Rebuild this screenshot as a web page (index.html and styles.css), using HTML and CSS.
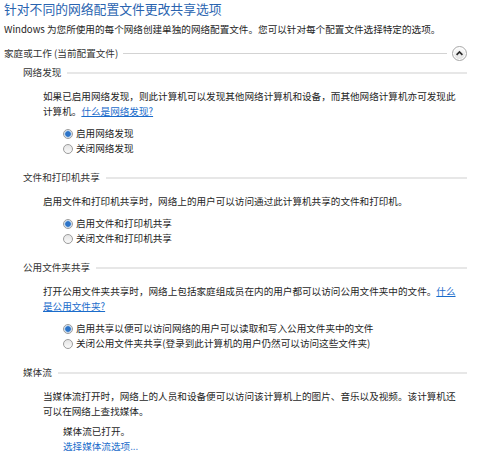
FILE: index.html
```html
<!DOCTYPE html>
<html lang="zh-CN">
<head>
  <meta charset="UTF-8">
  <title>高级共享设置</title>
  <link rel="stylesheet" href="styles.css">
</head>
<body>
  <div class="page">
    <h1 class="title">针对不同的网络配置文件更改共享选项</h1>
    <p class="intro">Windows 为您所使用的每个网络创建单独的网络配置文件。您可以针对每个配置文件选择特定的选项。</p>

    <div class="profile-head">
      <span>家庭或工作 (当前配置文件)</span>
      <span class="rule"></span>
      <span class="collapse">
        <svg width="15" height="15" viewBox="0 0 15 15"><path d="M4.6 8.8 L7.5 5.9 L10.4 8.8" fill="none" stroke="#2b2b2b" stroke-width="1.7"/></svg>
      </span>
    </div>

    <section class="group first">
      <div class="group-head"><span>网络发现</span><span class="rule"></span></div>
      <div class="desc">
        <span class="line">如果已启用网络发现，则此计算机可以发现其他网络计算机和设备，而其他网络计算机亦可发现此</span>
        <span class="line">计算机。<a href="#" class="link">什么是网络发现?</a></span>
      </div>
      <div class="options">
        <div class="option"><span class="radio checked"></span>启用网络发现</div>
        <div class="option"><span class="radio"></span>关闭网络发现</div>
      </div>
    </section>

    <section class="group">
      <div class="group-head"><span>文件和打印机共享</span><span class="rule"></span></div>
      <div class="desc">
        <span class="line">启用文件和打印机共享时，网络上的用户可以访问通过此计算机共享的文件和打印机。</span>
      </div>
      <div class="options">
        <div class="option"><span class="radio checked"></span>启用文件和打印机共享</div>
        <div class="option"><span class="radio"></span>关闭文件和打印机共享</div>
      </div>
    </section>

    <section class="group">
      <div class="group-head"><span>公用文件夹共享</span><span class="rule"></span></div>
      <div class="desc">
        <span class="line">打开公用文件夹共享时，网络上包括家庭组成员在内的用户都可以访问公用文件夹中的文件。<a href="#" class="link">什么</a></span>
        <span class="line"><a href="#" class="link">是公用文件夹?</a></span>
      </div>
      <div class="options">
        <div class="option"><span class="radio checked"></span>启用共享以便可以访问网络的用户可以读取和写入公用文件夹中的文件</div>
        <div class="option"><span class="radio"></span>关闭公用文件夹共享(登录到此计算机的用户仍然可以访问这些文件夹)</div>
      </div>
    </section>

    <section class="group">
      <div class="group-head"><span>媒体流</span><span class="rule"></span></div>
      <div class="desc">
        <span class="line">当媒体流打开时，网络上的人员和设备便可以访问该计算机上的图片、音乐以及视频。该计算机还</span>
        <span class="line">可以在网络上查找媒体。</span>
      </div>
      <div class="status">
        <div>媒体流已打开。</div>
        <a href="#" class="link plain">选择媒体流选项...</a>
      </div>
    </section>
  </div>
</body>
</html>
```

FILE: styles.css
```css
/* Base */
body {
  margin: 0;
  font-family: "Noto Sans CJK SC", sans-serif;
  font-size: 9.6px;
  line-height: 15px;
  color: #1e1e1e;
  background: #fff;
}

.page {
  width: 463px;
  padding-left: 4px;
}

/* Header */
.title {
  margin: 0;
  font-size: 12.8px;
  line-height: 18px;
  font-weight: normal;
  color: #2a64b0;
}

.intro {
  margin: 4px 0 0;
}

/* Profile header with collapse button */
.profile-head {
  display: flex;
  align-items: center;
  gap: 5px;
  height: 16px;
  margin-top: 8px;
  color: #333;
}

.profile-head .rule {
  flex: 1;
  height: 1px;
  background: #d3d3d3;
}

.collapse {
  width: 13px;
  height: 13px;
  border: 1px solid #a8a8a8;
  border-radius: 50%;
  background: linear-gradient(#fdfdfd, #e2e2e2);
  box-shadow: inset 0 0 0 1px #fff;
  position: relative;
}

.collapse svg {
  position: absolute;
  left: -1px;
  top: -1px;
}

/* Sections */
.group {
  margin-top: 14px;
}

.group.first {
  margin-top: 4px;
}

.group-head {
  display: flex;
  align-items: center;
  gap: 6px;
  padding-left: 19px;
  color: #333;
}

.group-head .rule {
  flex: 1;
  height: 2px;
  background: #e7e7e7;
}

.desc {
  margin: 9px 0 0 39px;
  width: 418px;
}

.desc .line {
  display: block;
  white-space: nowrap;
}

.link {
  color: #1a6ccb;
  text-decoration: underline;
}

.link.plain {
  text-decoration: none;
}

/* Radio options */
.options {
  margin: 7px 0 0 59px;
}

.option {
  display: flex;
  align-items: center;
  gap: 3px;
  height: 15px;
  white-space: nowrap;
}

.radio {
  width: 8px;
  height: 8px;
  border: 1px solid #9c9c9c;
  border-radius: 50%;
  background: linear-gradient(#e4e4e4, #fafafa);
}

.radio.checked {
  background: radial-gradient(circle, #2d74c8 0 2.4px, #9cc0e6 3px, #eef3f9 4px);
}

/* Media stream status */
.status {
  margin: 5px 0 0 59px;
}
```
